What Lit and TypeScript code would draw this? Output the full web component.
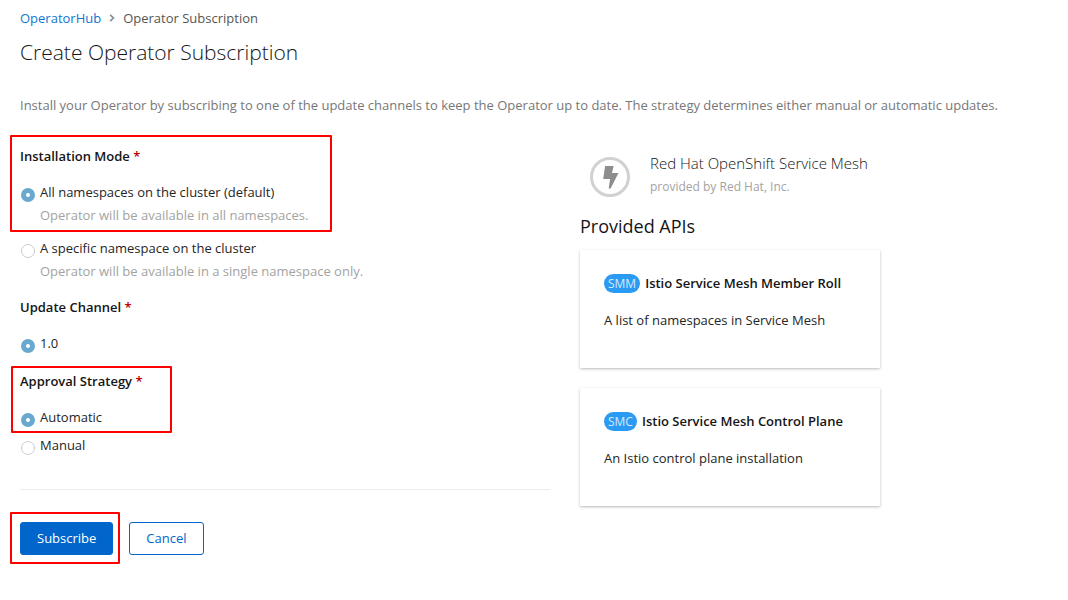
import { LitElement, html, css } from "lit";
import { customElement, property, state } from "lit/decorators.js";

interface ProvidedApi {
  abbr: string;
  name: string;
  description: string;
}

const APIS: ProvidedApi[] = [
  { abbr: "SMM", name: "Istio Service Mesh Member Roll", description: "A list of namespaces in Service Mesh" },
  { abbr: "SMC", name: "Istio Service Mesh Control Plane", description: "An Istio control plane installation" },
];

@customElement("api-card")
export class ApiCard extends LitElement {
  @property({ attribute: false }) api!: ProvidedApi;

  static styles = css`
    :host {
      display: block;
    }
    .card {
      box-sizing: border-box;
      min-height: 118px;
      padding: 24px;
      background: #fff;
      border-radius: 1px;
      box-shadow: 0 1px 3px rgba(3, 3, 3, 0.28);
    }
    .head {
      display: flex;
      align-items: center;
      gap: 5px;
    }
    .badge {
      padding: 0 4px;
      border-radius: 20px;
      background: #2b9af3;
      color: #d4eafc;
      font-size: 12px;
      line-height: 19px;
    }
    .name {
      margin: 0;
      font-size: 13px;
      line-height: 19px;
      font-weight: 600;
      color: #151515;
    }
    .text {
      margin: 17px 0 0;
      line-height: 20px;
    }
  `;

  render() {
    return html`
      <article class="card">
        <div class="head">
          <span class="badge">${this.api.abbr}</span>
          <h3 class="name">${this.api.name}</h3>
        </div>
        <p class="text">${this.api.description}</p>
      </article>
    `;
  }
}

@customElement("app-root")
export class AppRoot extends LitElement {
  @state() private mode = "all";
  @state() private strategy = "automatic";

  static styles = css`
    :host {
      display: block;
      box-sizing: border-box;
      padding: 8px 20px 24px;
      background: #fff;
      color: #252525;
      font-family: "Open Sans", "Noto Sans", sans-serif;
      font-size: 13px;
      line-height: 20px;
    }
    .crumbs {
      display: flex;
      align-items: center;
      gap: 8px;
      color: #555;
    }
    .crumbs a {
      color: #0f76d3;
      text-decoration: none;
    }
    .chevron {
      display: block;
      width: 6px;
      height: 8px;
    }
    .title {
      margin: 10px 0 0;
      font-size: 21px;
      line-height: 28px;
      font-weight: 300;
      color: #151515;
    }
    .intro {
      margin: 29px 0 0;
      color: #777;
    }
    .columns {
      display: grid;
      grid-template-columns: minmax(0, 530px) minmax(0, 1fr);
      gap: 30px;
      margin-top: 31px;
      align-items: start;
    }
    .group {
      position: relative;
      margin: 0 0 18px;
      padding: 0;
      border: 0;
      min-width: 0;
    }
    .group.first {
      margin-bottom: 16px;
    }
    .legend {
      display: block;
      margin-bottom: 16px;
      padding: 0;
      font-weight: 600;
      color: #151515;
    }
    .required {
      color: #b00;
    }
    .option {
      display: grid;
      grid-template-columns: 14px 1fr;
      column-gap: 5px;
      padding-left: 1px;
    }
    .option + .option {
      margin-top: 8px;
    }
    .option.detailed + .option {
      margin-top: 13px;
    }
    .option input {
      appearance: none;
      box-sizing: border-box;
      width: 14px;
      height: 14px;
      margin: 6px 0 0;
      border: 1px solid #ccc;
      border-radius: 50%;
      background: #fff;
    }
    .option input:checked {
      border: 5px solid #6aa9cf;
    }
    .hint {
      grid-column: 2;
      margin: 3px 0 0;
      color: #a3a3a3;
    }
    .mark {
      position: absolute;
      box-sizing: border-box;
      border: 2px solid #f00;
      border-radius: 1px;
      pointer-events: none;
    }
    .mark.mode {
      inset: -11px auto auto -10px;
      width: 322px;
      height: 97px;
    }
    .mark.strategy {
      inset: -5px auto auto -9px;
      width: 161px;
      height: 67px;
    }
    .mark.submit {
      inset: -10px -7px -9px -10px;
    }
    .actions {
      display: flex;
      gap: 16px;
      margin-top: 34px;
      padding-top: 32px;
      border-top: 1px solid #ededed;
    }
    .submit-wrap {
      position: relative;
      display: flex;
    }
    .btn {
      padding: 5px 16px;
      border: 1px solid #06c;
      border-radius: 3px;
      background: #fff;
      color: #06c;
      font: inherit;
      line-height: 21px;
    }
    .btn.primary {
      background: #06c;
      color: #fff;
    }
    .provider {
      display: flex;
      gap: 20px;
      padding: 6px 10px 0;
    }
    .logo {
      display: block;
      flex: none;
      width: 40px;
      height: 40px;
      margin-top: 5px;
    }
    .product {
      margin: 0;
      font-size: 15px;
      line-height: 22px;
      font-weight: 300;
      color: #151515;
    }
    .vendor {
      margin: 3px 0 0;
      font-size: 12px;
      line-height: 20px;
      color: #a3a3a3;
    }
    .apis {
      margin: 18px 0 12px;
      font-size: 18px;
      line-height: 23px;
      font-weight: 400;
      color: #151515;
    }
    .cards {
      display: grid;
      gap: 20px;
      max-width: 300px;
    }
  `;

  private star() {
    return html`<span class="required">*</span>`;
  }

  render() {
    return html`
      <nav class="crumbs" aria-label="Breadcrumb">
        <a href="#">OperatorHub</a>
        <svg class="chevron" viewBox="0 0 6 8" aria-hidden="true">
          <path d="M1.2 .8 4.4 4 1.2 7.2" fill="none" stroke="#8b8d8f" stroke-width="1.7" />
        </svg>
        <span>Operator Subscription</span>
      </nav>
      <h1 class="title">Create Operator Subscription</h1>
      <p class="intro">
        Install your Operator by subscribing to one of the update channels to keep the Operator up to date. The strategy
        determines either manual or automatic updates.
      </p>
      <div class="columns">
        <form @submit=${(e: Event) => e.preventDefault()}>
          <div class="group first" role="radiogroup" aria-labelledby="mode-label">
            <div class="legend" id="mode-label">Installation Mode ${this.star()}</div>
            <div class="option detailed">
              <input type="radio" id="all" name="mode" .checked=${this.mode === "all"} @change=${() => (this.mode = "all")} />
              <label for="all">All namespaces on the cluster (default)</label>
              <p class="hint">Operator will be available in all namespaces.</p>
            </div>
            <div class="option detailed">
              <input type="radio" id="one" name="mode" .checked=${this.mode === "one"} @change=${() => (this.mode = "one")} />
              <label for="one">A specific namespace on the cluster</label>
              <p class="hint">Operator will be available in a single namespace only.</p>
            </div>
            <div class="mark mode"></div>
          </div>
          <div class="group" role="radiogroup" aria-labelledby="channel-label">
            <div class="legend" id="channel-label">Update Channel ${this.star()}</div>
            <div class="option">
              <input type="radio" id="channel" name="channel" checked />
              <label for="channel">1.0</label>
            </div>
          </div>
          <div class="group" role="radiogroup" aria-labelledby="strategy-label">
            <div class="legend" id="strategy-label">Approval Strategy ${this.star()}</div>
            <div class="option">
              <input type="radio" id="auto" name="strategy" .checked=${this.strategy === "automatic"} @change=${() => (this.strategy = "automatic")} />
              <label for="auto">Automatic</label>
            </div>
            <div class="option">
              <input type="radio" id="manual" name="strategy" .checked=${this.strategy === "manual"} @change=${() => (this.strategy = "manual")} />
              <label for="manual">Manual</label>
            </div>
            <div class="mark strategy"></div>
          </div>
          <div class="actions">
            <div class="submit-wrap">
              <button class="btn primary" type="submit">Subscribe</button>
              <div class="mark submit"></div>
            </div>
            <button class="btn" type="button">Cancel</button>
          </div>
        </form>
        <section>
          <div class="provider">
            <svg class="logo" viewBox="0 0 40 40" aria-hidden="true">
              <circle cx="20" cy="20" r="18.5" fill="#fff" stroke="#d1d1d1" stroke-width="3" />
              <path d="M15.1 9h8.5l-1.6 6.9h6.5L20.6 31.6h-1.9l1.4-9.5h-6.9z" fill="#8b8d8f" />
            </svg>
            <div>
              <h2 class="product">Red Hat OpenShift Service Mesh</h2>
              <p class="vendor">provided by Red Hat, Inc.</p>
            </div>
          </div>
          <h2 class="apis">Provided APIs</h2>
          <div class="cards">${APIS.map((api) => html`<api-card .api=${api}></api-card>`)}</div>
        </section>
      </div>
    `;
  }
}
